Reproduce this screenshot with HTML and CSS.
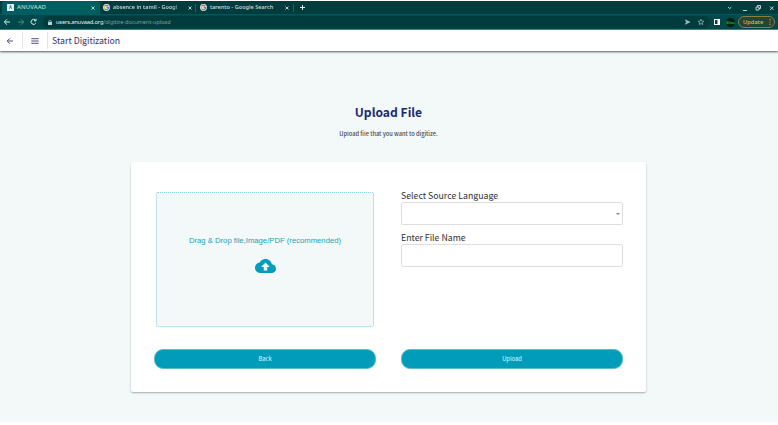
FILE: index.html
```html
<!DOCTYPE html>
<html lang="en">
<head>
<meta charset="utf-8">
<title>ANUVAAD</title>
<link rel="stylesheet" href="styles.css">
</head>
<body>
<div class="tabs">
  <div class="tab active">
    <svg class="fav" viewBox="0 0 7 7"><path fill="#e4f3f2" d="M0 0h7v7H0z"/><path fill="#4b999c" d="M3 1h1l1 4H4V4H3v1H2z"/></svg>
    <span class="name anuvaad">ANUVAAD</span><svg class="x" viewBox="0 0 4 4"><path d="M.5.5l3 3m0-3l-3 3"/></svg>
  </div>
  <div class="tab second">
    <svg class="fav" viewBox="0 0 8 8"><circle cx="4" cy="4" r="3.9" fill="#f3f3f3"/><path d="M2 2.500A2.500 2.500 0 0 1 6 2.500" stroke="#e65045"/><path d="M2 2.500A2.500 2.500 0 0 0 2 5.500" stroke="#e9b642"/><path d="M2 5.500A2.500 2.500 0 0 0 5.500 6" stroke="#40a568"/><path d="M4 4h2.500A2.500 2.500 0 0 1 5.500 6" stroke="#4c83dd"/></svg>
    <span class="name absence">absence in tamil - Googl</span><svg class="x" viewBox="0 0 4 4"><path d="M.5.5l3 3m0-3l-3 3"/></svg>
  </div>
  <div class="tab third">
    <svg class="fav" viewBox="0 0 8 8"><circle cx="4" cy="4" r="3.9" fill="#f3f3f3"/><path d="M2 2.500A2.500 2.500 0 0 1 6 2.500" stroke="#e65045"/><path d="M2 2.500A2.500 2.500 0 0 0 2 5.500" stroke="#e9b642"/><path d="M2 5.500A2.500 2.500 0 0 0 5.500 6" stroke="#40a568"/><path d="M4 4h2.500A2.500 2.500 0 0 1 5.500 6" stroke="#4c83dd"/></svg>
    <span class="name tarento">tarento - Google Search</span><svg class="x" viewBox="0 0 4 4"><path d="M.5.5l3 3m0-3l-3 3"/></svg>
  </div>
  <svg class="plus" viewBox="0 0 5 5"><path d="M2.500 0v5M0 2.500h5"/></svg>
  <svg class="window" viewBox="0 0 48 12"><path d="M1 5l1.700 1.700L4.400 5M16 8.500h4"/><path d="M29 5h3v3h-3zM30.500 5V3.500h3v3H32M43 4.500l3.500 3.500m0-3.500l-3.500 3.500"/></svg>
</div>
<div class="toolbar">
  <svg class="nav" viewBox="0 0 40 14"><path d="M10 7H4.500M7 4.300L4.300 7 7 9.700"/><path class="dim" d="M18 7h5.500M21 4.300L23.700 7 21 9.700"/><path d="M35.500 5.300A2.500 2.500 0 1 0 35.800 8M36 3.800v2h-2"/></svg>
  <div class="address">
    <svg class="lock" viewBox="0 0 4 5"><path fill="#b9d5d5" d="M0 2h4v3H0z"/><path fill="none" stroke="#b9d5d5" stroke-width=".7" d="M.9 2V1.200a1.100 1 0 0 1 2.200 0V2"/></svg>
    <span class="url"><b>users.anuvaad.org</b>/digitize-document-upload</span>
    <svg class="marks" viewBox="0 0 22 14"><path fill="#a2c3c3" d="M1 4.200L6.500 7 1 9.800l.8-2.500L4 7l-2.200-.3z"/><path fill="none" stroke="#a2c3c3" stroke-width=".7" d="M17 4.300l.8 1.800 2 .2-1.500 1.300.5 1.900-1.800-1-1.800 1 .5-1.900-1.500-1.300 2-.2z"/></svg>
  </div>
  <svg class="panel" viewBox="0 0 6 6"><path fill="#fff" d="M0 0h6v6H0z"/><path fill="#00484a" d="M1 1h2.500v4H1z"/></svg>
  <span class="avatar">Bhas</span>
  <div class="update"><span>Update</span><svg viewBox="0 0 2 8"><path d="M.4 1h1.200v1.200H.4zM.4 3.400h1.200v1.200H.4zM.4 5.800h1.200V7H.4z"/></svg></div>
</div>
<header>
  <div class="cell back"><svg viewBox="0 0 8 8"><path d="M7 4H1.300M3.900 1.300L1.200 4l2.700 2.700"/></svg></div>
  <div class="cell menu"><svg viewBox="0 0 8 8"><path d="M.3 1.700h7.400M.3 4h7.400M.3 6.300h7.400"/></svg></div>
  <div class="title">Start Digitization</div>
</header>
<main>
  <h1>Upload File</h1>
  <p class="sub">Upload file that you want to digitize.</p>
  <section class="card">
    <div class="drop">
      <p>Drag &amp; Drop file,Image/PDF (recommended)</p>
      <svg viewBox="0 4 24 16"><path d="M19.350 10.040C18.670 6.590 15.640 4 12 4 9.110 4 6.600 5.640 5.350 8.040 2.340 8.360 0 10.910 0 14c0 3.310 2.690 6 6 6h13c2.760 0 5-2.240 5-5 0-2.640-2.050-4.780-4.650-4.960zM14 13v4h-4v-4H7l5-5 5 5h-3z"/></svg>
    </div>
    <div class="form">
      <label>Select Source Language</label>
      <div class="field"><i></i></div>
      <label>Enter File Name</label>
      <div class="field"></div>
    </div>
    <button>Back</button>
    <button>Upload</button>
  </section>
</main>
</body>
</html>
```
FILE: styles.css
```css
* { box-sizing: border-box; }
body { margin: 0; padding-top: 1px; height: 425px; overflow: hidden; background: #fff; font-family: "Noto Sans CJK SC", "Noto Sans", sans-serif; }
svg { display: block; flex: none; }
.tabs { height: 14px; background: #003c3d; display: flex; align-items: center; padding-left: 2px; border-bottom: 1px solid #00585b; font: 500 5.500px/13px "Noto Sans", sans-serif; letter-spacing: .05px; color: #d5e2e1; }
.tab { display: flex; align-items: center; height: 14px; position: relative; }
.active { width: 98px; background: #005e60; border-radius: 3px 3px 0 0; padding-left: 5px; color: #b9dbda; font-size: 6px; }
.second { width: 96px; padding-left: 3px; }
.third { width: 98px; padding-left: 4px; }
.second::after, .third::after { content: ""; position: absolute; right: 0; top: 3px; width: 1px; height: 8px; background: #28605f; }
.fav { width: 7px; height: 7px; margin-right: 3px; fill: none; stroke-width: 1.500; }
.name { white-space: nowrap; }
.anuvaad { width: 74px; }
.absence { width: 72px; margin-right: 3px; -webkit-mask-image: linear-gradient(to right, #000 82%, transparent); mask-image: linear-gradient(to right, #000 82%, transparent); }
.tarento { width: 72px; margin-right: 3px; }
.x { width: 4px; height: 4px; stroke: #d2e0df; stroke-width: .9; fill: none; }
.plus { width: 5px; height: 5px; margin-left: 6px; stroke: #e0e9e8; stroke-width: 1; }
.window { width: 48px; height: 12px; margin-left: auto; margin-right: 3px; fill: none; stroke: #d2e0df; stroke-width: .9; }
.toolbar { height: 15px; background: #00484a; display: flex; align-items: center; border-bottom: 1px solid #4b8382; }
.nav { width: 40px; height: 14px; fill: none; stroke: #e0eeee; stroke-width: 1; }
.nav .dim { stroke: #508b8b; }
.address { display: flex; align-items: center; width: 667px; height: 12px; margin-left: 3px; border-radius: 6px; background: #003c3e; padding-left: 5px; color: #739e9e; }
.lock { width: 4px; height: 5px; margin-right: 4px; }
.url { font: 5.700px/12px "Noto Sans", sans-serif; letter-spacing: -.15px; white-space: nowrap; }
.url b { font-weight: 400; color: #e5f1f1; }
.marks { width: 22px; height: 14px; margin-left: auto; margin-right: 4px; }
.panel { width: 6px; height: 6px; margin-left: 4px; }
.avatar { width: 9px; height: 9px; border-radius: 50%; background: #001d10; color: #1ab329; font: 700 3.500px/9px "Noto Sans", sans-serif; text-align: center; margin-left: 6px; }
.update { width: 37px; height: 12px; margin-left: 3px; border: 1px solid #877f3b; border-radius: 6px; background: #24443a; display: flex; align-items: center; justify-content: space-between; padding: 0 3px 0 4px; font: 500 5.800px/10px "Noto Sans", sans-serif; color: #dfbd4e; }
.update svg { width: 2px; height: 8px; fill: #dc8b20; }
header { height: 21px; position: relative; background: #fff; display: flex; align-items: center; box-shadow: 0 1px 2px rgba(0,0,0,.65); color: #37346b; }
.cell { height: 17px; display: flex; align-items: center; border-right: 1px solid #e3e3e8; }
.cell svg { width: 8px; height: 8px; stroke: #48447d; stroke-width: .95; fill: none; }
.back { width: 23px; padding-left: 6px; }
.menu { width: 25px; padding-left: 8px; }
.title { margin-left: 4px; font-size: 8.750px; line-height: 20px; margin-top: 1px; white-space: nowrap; }
main { height: 371px; background: #f3f9f9; display: flex; flex-direction: column; align-items: center; padding-right: 1px; }
h1 { margin: 50px 0 0; font-size: 12.100px; line-height: 22px; font-weight: 700; color: #1a2a72; }
.sub { margin: 5px 0 0; font-size: 5.700px; line-height: 12px; color: #44494d; font-weight: 500; }
.card { width: 515px; height: 230px; margin-top: 22px; background: #fff; border-radius: 2px; box-shadow: 0 1px 2px rgba(0,0,0,.32); display: grid; grid-template-columns: 222px 222px; column-gap: 25px; grid-template-rows: 157px 20px; padding: 30px 23px; align-content: start; }
.drop { width: 218px; height: 135px; margin-left: 2px; background: #f3f9f9; border: 1px dotted #8ccddb; border-radius: 2px; display: flex; flex-direction: column; align-items: center; color: #1c9fb8; }
.drop p { margin: 42px 0 0; font: 7.700px/12px "Liberation Sans", sans-serif; white-space: nowrap; }
.drop svg { width: 21px; height: 14px; margin-top: 12px; fill: #039cb9; }
label { display: block; font-size: 8.750px; line-height: 12px; height: 10px; margin-top: -2px; color: #303030; }
.field { height: 23px; margin: 2px 0 9px; border: 1px solid #dedede; border-radius: 2px; display: flex; align-items: center; justify-content: flex-end; padding-right: 2px; }
.field i { border: 2px solid transparent; border-top-color: #858585; border-bottom: 0; }
button { height: 20px; padding: 0; border: 1px solid #60bac9; border-radius: 9px; background: #009cba; color: #e5f6f8; font: 5.800px/18px "Noto Sans CJK SC", sans-serif; }
```
